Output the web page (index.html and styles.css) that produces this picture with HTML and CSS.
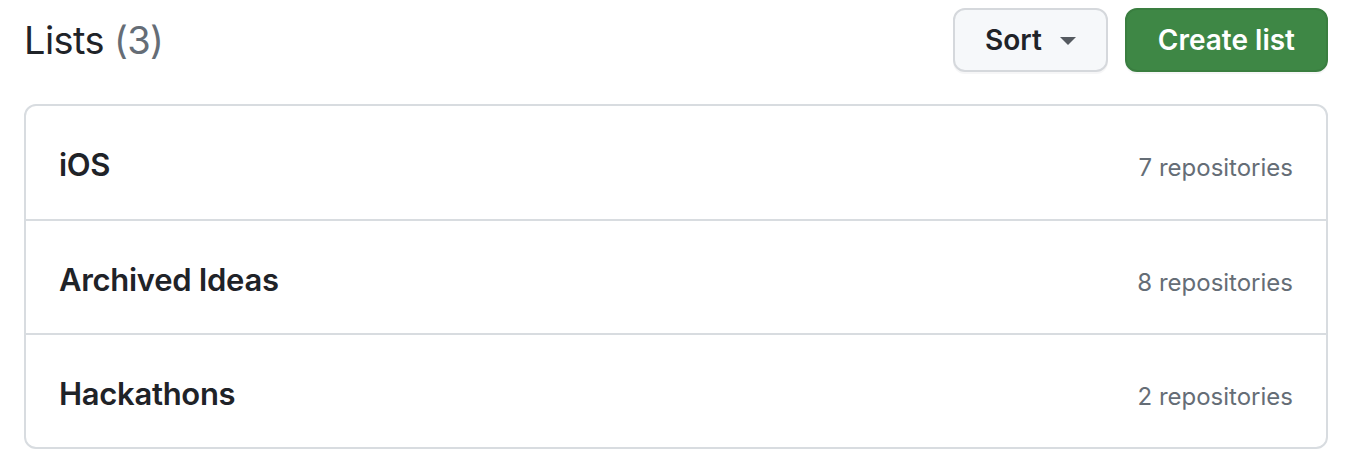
FILE: index.html
```html
<!DOCTYPE html>
<html lang="en">
<head>
  <meta charset="UTF-8">
  <title>Lists</title>
  <link rel="stylesheet" href="styles.css">
</head>
<body>
  <div class="page">
    <div class="header">
      <h2 class="title">Lists <span class="count">(3)</span></h2>
      <div class="actions">
        <button class="btn">Sort <span class="caret"></span></button>
        <button class="btn btn-primary">Create list</button>
      </div>
    </div>

    <div class="box">
      <div class="row">
        <span class="name">iOS</span>
        <span class="repos">7 repositories</span>
      </div>
      <div class="row">
        <span class="name">Archived Ideas</span>
        <span class="repos">8 repositories</span>
      </div>
      <div class="row">
        <span class="name">Hackathons</span>
        <span class="repos">2 repositories</span>
      </div>
    </div>
  </div>
</body>
</html>
```

FILE: styles.css
```css
body {
  margin: 0;
  font-family: Inter, "Liberation Sans", sans-serif;
  color: #1f2328;
  background: #fff;
}
.page {
  width: 1304px;
  padding: 8px 0 0 24px;
}
.header {
  display: flex;
  align-items: center;
  justify-content: space-between;
  height: 64px;
}
.title {
  margin: 0;
  font-size: 38px;
  font-weight: 400;
  letter-spacing: -0.6px;
}
.count {
  color: #656d76;
}
.actions {
  display: flex;
  gap: 17px;
}
.btn {
  display: flex;
  align-items: center;
  gap: 18px;
  height: 64px;
  padding: 0 30px;
  font-family: inherit;
  font-size: 28px;
  font-weight: 600;
  color: #1f2328;
  background-color: #f6f8fa;
  border: 2px solid #d5d8dc;
  border-radius: 12px;
  box-shadow: 0 2px 0 rgba(31, 35, 40, 0.04);
}
.btn-primary {
  padding: 0 31px;
  color: #fff;
  background-color: #3e8745;
  border-color: #3a7e40;
}
.caret {
  width: 0;
  height: 0;
  border-left: 8px solid transparent;
  border-right: 8px solid transparent;
  border-top: 8px solid #555a60;
  margin-top: 2px;
}
.box {
  margin-top: 32px;
  border: 2px solid #d8dce0;
  border-radius: 12px;
}
.row {
  box-sizing: border-box;
  display: flex;
  align-items: center;
  justify-content: space-between;
  height: 113px;
  padding: 4px 33px 0;
}
.row + .row {
  height: 114px;
  border-top: 2px solid #d8dce0;
}
.name {
  font-size: 31px;
  font-weight: 600;
  letter-spacing: -0.3px;
}
.repos {
  margin-top: 6px;
  font-size: 24px;
  color: #656d76;
}
```
